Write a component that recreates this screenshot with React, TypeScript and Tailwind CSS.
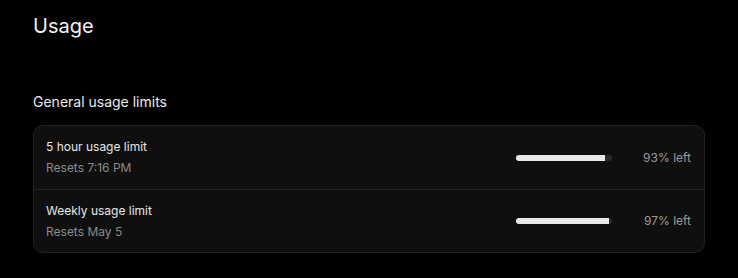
const limits = [
  { label: "5 hour usage limit", reset: "Resets 7:16 PM", left: 93 },
  { label: "Weekly usage limit", reset: "Resets May 5", left: 97 },
];

export default function App() {
  return (
    <div className="min-h-[278px] w-full bg-black px-[33px] pt-[12px] text-white font-['Inter',sans-serif]">
      <h1 className="text-[20px] leading-[28px] text-[#f2f2f2]">Usage</h1>

      <h2 className="mt-[52px] text-[14px] leading-[20px] text-[#eaeaea]">General usage limits</h2>

      <div className="mt-[13px] rounded-[10px] border border-[#232323] bg-[#0f0f0f]">
        {limits.map((l, i) => (
          <div
            key={l.label}
            className={`flex h-[63px] items-center justify-between pl-[12px] pr-[13px] ${i > 0 ? "border-t border-[#232323]" : ""}`}
          >
            <div className="flex flex-col gap-[5px]">
              <span className="text-[12px] leading-[16px] text-[#e6e6e6]">{l.label}</span>
              <span className="text-[12px] leading-[16px] text-[#8a8a8a]">{l.reset}</span>
            </div>
            <div className="flex items-center">
              <div className="h-[6px] w-[96px] overflow-hidden rounded-full bg-[#2a2a2a]">
                <div className="h-full bg-[#e8e8e8]" style={{ width: `${l.left}%` }} />
              </div>
              <span className="w-[79px] text-right text-[12px] leading-[16px] text-[#9a9a9a]">{l.left}% left</span>
            </div>
          </div>
        ))}
      </div>
    </div>
  );
}
